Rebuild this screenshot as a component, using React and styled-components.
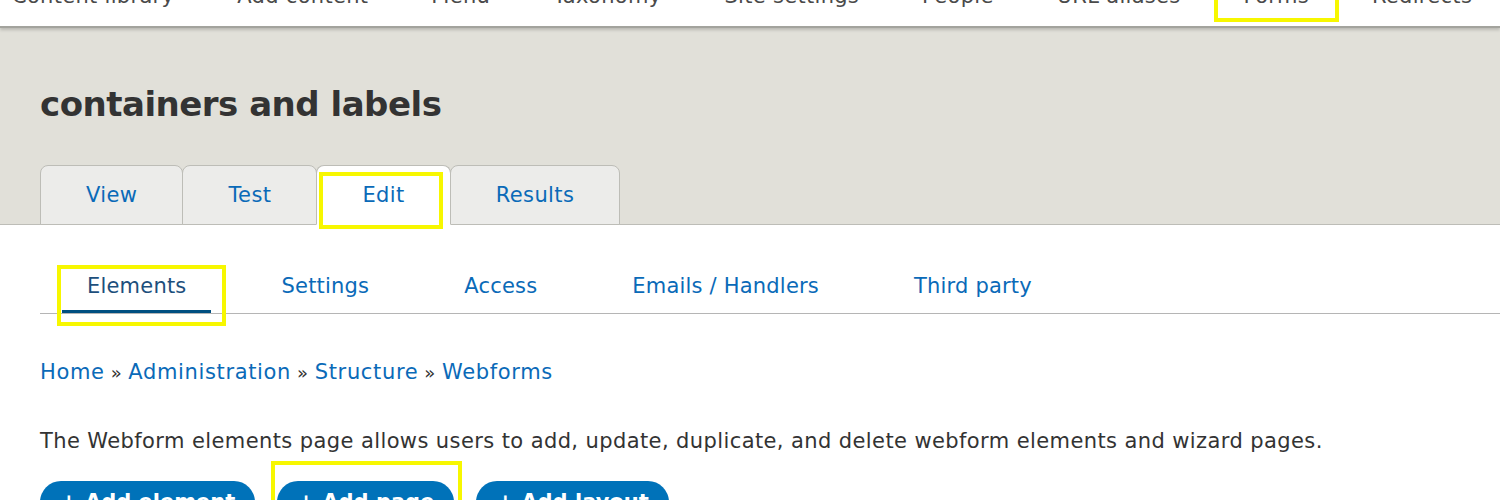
import React from 'react';
import styled, { createGlobalStyle, css } from 'styled-components';

const GlobalStyle = createGlobalStyle`
  body {
    margin: 0;
    background: #ffffff;
    font-family: "DejaVu Sans", Verdana, sans-serif;
    color: #333333;
  }
`;

const topLinks = [
  'Content library',
  'Add content',
  'Menu',
  'Taxonomy',
  'Site settings',
  'People',
  'URL aliases',
  'Forms',
  'Redirects',
];

const primaryTabs = ['View', 'Test', 'Edit', 'Results'];
const secondaryTabs = ['Elements', 'Settings', 'Access', 'Emails / Handlers', 'Third party'];
const crumbs = ['Home', 'Administration', 'Structure', 'Webforms'];
const actions = ['Add element', 'Add page', 'Add layout'];

export default function App() {
  return (
    <Page>
      <GlobalStyle />
      <Toolbar>
        {topLinks.map((link) => (
          <ToolbarItem key={link} highlighted={link === 'Forms'}>
            {link}
          </ToolbarItem>
        ))}
      </Toolbar>

      <Header>
        <Title>containers and labels</Title>
        <Tabs>
          {primaryTabs.map((tab) => (
            <Tab key={tab} active={tab === 'Edit'} highlighted={tab === 'Edit'}>
              {tab}
            </Tab>
          ))}
        </Tabs>
      </Header>

      <Content>
        <SubTabs>
          {secondaryTabs.map((tab) => (
            <SubTab key={tab} active={tab === 'Elements'} highlighted={tab === 'Elements'}>
              {tab}
            </SubTab>
          ))}
        </SubTabs>

        <Breadcrumb>
          {crumbs.map((crumb, i) => (
            <React.Fragment key={crumb}>
              {i > 0 && <Separator>»</Separator>}
              <Crumb href="#">{crumb}</Crumb>
            </React.Fragment>
          ))}
        </Breadcrumb>

        <Description>
          The Webform elements page allows users to add, update, duplicate, and delete webform
          elements and wizard pages.
        </Description>

        <Actions>
          {actions.map((action) => (
            <ActionButton key={action} highlighted={action === 'Add page'}>
              + {action}
            </ActionButton>
          ))}
        </Actions>
      </Content>
    </Page>
  );
}

/* Styled components
   ========================================================================== */
const highlight = (inset) => css`
  position: relative;

  &::after {
    content: '';
    position: absolute;
    inset: ${inset};
    border: 4px solid #f7f700;
    pointer-events: none;
  }
`;

const Page = styled.div`
  width: 1500px;
  height: 500px;
  overflow: hidden;
`;

const Toolbar = styled.nav`
  display: flex;
  gap: 63px;
  height: 26px;
  padding-left: 12px;
  background: #ffffff;
  border-bottom: 2px solid #a3a39d;
  box-shadow: 0 2px 3px rgba(0, 0, 0, 0.18);
  position: relative;
  z-index: 1;
`;

const ToolbarItem = styled.span`
  display: block;
  margin-top: -16px;
  height: 38px;
  font-size: 21px;
  line-height: 24px;
  letter-spacing: 0.3px;
  color: #4a4a4a;
  white-space: nowrap;
  ${({ highlighted }) =>
    highlighted &&
    css`
      ${highlight('0 -30px 0 -30px')}
      &::after {
        bottom: 0;
      }
    `}
`;

const Header = styled.header`
  background: #e1e0d9;
  padding: 0 0 0 40px;
  border-bottom: 1px solid #bdbdb7;
  height: 197px;
  box-sizing: border-box;
  display: flex;
  flex-direction: column;
`;

const Title = styled.h1`
  margin: 56px 0 0;
  font-size: 34px;
  line-height: 40px;
  font-weight: bold;
  color: #333333;
  letter-spacing: -0.5px;
`;

const Tabs = styled.div`
  display: flex;
  margin-top: auto;
  margin-bottom: -1px;
`;

const Tab = styled.a`
  display: flex;
  align-items: center;
  height: 58px;
  padding: 0 45px;
  background: ${({ active }) => (active ? '#ffffff' : '#ececea')};
  border: 1px solid #bdbdb7;
  border-bottom-color: ${({ active }) => (active ? '#ffffff' : '#bdbdb7')};
  border-radius: 8px 8px 0 0;
  margin-right: -1px;
  font-size: 21px;
  letter-spacing: 0.4px;
  color: #0a6ab8;
  ${({ highlighted }) =>
    highlighted &&
    css`
      ${highlight('6px 7px -5px 2px')}
    `}
`;

const Content = styled.main`
  padding: 0 0 0 40px;
`;

const SubTabs = styled.div`
  display: flex;
  gap: 45px;
  margin-top: 40px;
  padding-left: 22px;
  border-bottom: 1px solid #b5b5b5;
`;

const SubTab = styled.a`
  display: block;
  padding: 0 25px;
  height: 48px;
  line-height: 42px;
  font-size: 21px;
  letter-spacing: 0.2px;
  color: ${({ active }) => (active ? '#1d4f7c' : '#0a6ab8')};
  white-space: nowrap;
  box-sizing: border-box;
  border-bottom: 3px solid ${({ active }) => (active ? '#004f80' : 'transparent')};
  ${({ highlighted }) =>
    highlighted &&
    css`
      ${highlight('0 -15px -16px -5px')}
    `}
`;

const Breadcrumb = styled.nav`
  margin-top: 44px;
  font-size: 21px;
  line-height: 28px;
  letter-spacing: 0.65px;
`;

const Crumb = styled.a`
  color: #0a6ab8;
  text-decoration: none;
`;

const Separator = styled.span`
  color: #333333;
  margin: 0 6px;
  font-size: 18px;
`;

const Description = styled.p`
  margin: 40px 0 0;
  font-size: 21px;
  line-height: 28px;
  letter-spacing: 0.4px;
  color: #333333;
`;

const Actions = styled.div`
  display: flex;
  gap: 22px;
  margin-top: 26px;
`;

const ActionButton = styled.button`
  height: 42px;
  padding: 0 20px;
  border: none;
  border-radius: 21px;
  background: #0072b9;
  color: #ffffff;
  font-family: inherit;
  font-size: 21px;
  font-weight: bold;
  white-space: nowrap;
  ${({ highlighted }) =>
    highlighted &&
    css`
      ${highlight('-20px -8px -10px -6px')}
    `}
`;
